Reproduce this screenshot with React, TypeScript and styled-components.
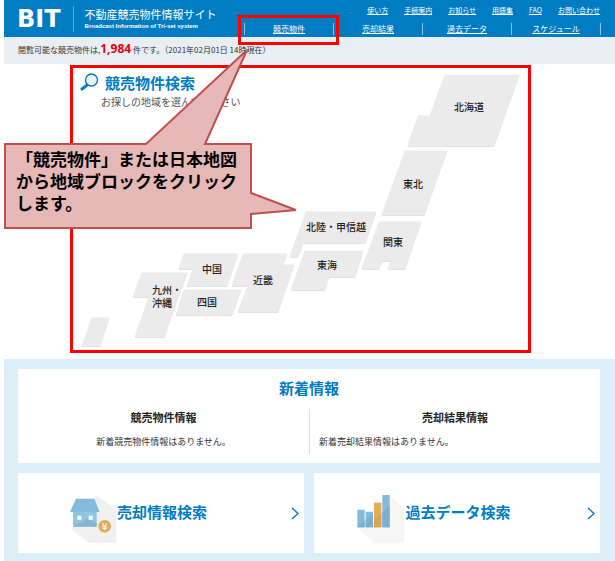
import React from "react";
import styled, { createGlobalStyle } from "styled-components";

const GlobalStyle = createGlobalStyle`
  *, *::before, *::after { box-sizing: border-box; }
  body {
    margin: 0;
    background: #fff;
    color: #333;
    font-family: "Noto Sans CJK JP", "Noto Sans", sans-serif;
  }
  h1, h2, h3, p, ul { margin: 0; padding: 0; }
  ul { list-style: none; }
`;

const Page = styled.div`
  position: relative;
  margin-left: 4px;
`;

const Header = styled.header`
  display: flex;
  justify-content: space-between;
  height: 37px;
  padding: 0 14px 0 13px;
  background: #007cc3;
  color: #fff;
`;

const Brand = styled.div`
  display: flex;
  align-items: center;
`;

const Logo = styled.a`
  padding-right: 12px;
  color: #fff;
  font: 700 24px/26px "DejaVu Sans", sans-serif;
  text-decoration: none;
`;

const SiteName = styled.div`
  padding-left: 11px;
  border-left: 1px solid #55a8d9;
`;

const SiteTitle = styled.h1`
  font-size: 11px;
  font-weight: 400;
  line-height: 16px;
  white-space: nowrap;
`;

const SiteSubtitle = styled.p`
  padding-bottom: 2px;
  font: 700 6px/8px "Liberation Sans", sans-serif;
  white-space: nowrap;
`;

const Menus = styled.div`
  display: flex;
  flex-direction: column;
  align-items: flex-end;
  padding-top: 5px;
  gap: 8px;
`;

const HelpLinks = styled.ul`
  display: flex;
  gap: 16px;
  padding-right: 1px;
  font-size: 7px;
  line-height: 10px;
  white-space: nowrap;
`;

const HeaderLink = styled.a`
  color: #fff;
  text-decoration: underline;
`;

const MainNav = styled.ul`
  display: flex;
  border-left: 1px solid #8cc4e6;
  font-size: 8px;
  line-height: 12px;
`;

const NavItem = styled.li<{ $marked?: boolean }>`
  position: relative;
  width: 89px;
  border-right: 1px solid #8cc4e6;
  text-align: center;
  ${({ $marked }) =>
    $marked &&
    `&::after {
      content: "";
      position: absolute;
      inset: -8px -6px -10px -7px;
      border: 3px solid #f00;
      pointer-events: none;
    }`}
`;

const Notice = styled.p`
  height: 27px;
  padding-left: 14px;
  background: #e9eef3;
  color: #333;
  font-size: 8px;
  line-height: 26px;
  white-space: nowrap;
`;

const Count = styled.strong`
  margin-right: 2px;
  color: #e60012;
  font: 700 12px/20px "Open Sans", sans-serif;
`;

const SearchArea = styled.main`
  padding: 1px 84px 6px 66px;
`;

const SearchPanel = styled.section`
  display: grid;
  border: 3px solid #f00;
`;

const SearchIntro = styled.div`
  grid-area: 1 / 1;
  display: grid;
  grid-template-columns: 20px 1fr;
  align-content: start;
  column-gap: 5px;
  padding: 4px 7px;
`;

const SearchTitle = styled.h2`
  color: #007cc3;
  font-size: 15px;
  font-weight: 700;
  line-height: 22px;
`;

const SearchHint = styled.p`
  grid-column: 1 / 3;
  padding-left: 21px;
  color: #555;
  font-size: 10px;
  line-height: 16px;
`;

const MapCanvas = styled.div`
  grid-area: 1 / 1;
  position: relative;
  height: 282px;
`;

const MapDrawing = styled.svg`
  display: block;
  overflow: visible;
`;

const RegionLink = styled.a<{ $x: number; $y: number }>`
  position: absolute;
  left: ${({ $x }) => $x}px;
  top: ${({ $y }) => $y}px;
  transform: translate(-50%, -50%);
  color: #222;
  font-size: 10px;
  font-weight: 500;
  line-height: 13px;
  text-decoration: none;
  white-space: pre;
`;

const Callout = styled.aside`
  position: absolute;
  top: 143px;
  left: 0;
  width: 248px;
  height: 86px;
`;

const CalloutShape = styled.svg`
  position: absolute;
  top: -97px;
  left: 0;
`;

const CalloutText = styled.p`
  position: relative;
  padding: 5px 0 0 12px;
  color: #000;
  font-size: 17px;
  font-weight: 700;
  line-height: 22px;
  white-space: nowrap;
`;

const Lower = styled.div`
  display: grid;
  grid-template-columns: 1fr 1fr;
  gap: 10px;
  padding: 10px 15px 14px 14px;
  background: #dceef8;
`;

const News = styled.section`
  grid-column: 1 / 3;
  padding: 8px 0 9px;
  background: #fff;
`;

const NewsTitle = styled.h2`
  color: #007cc3;
  font-size: 15px;
  line-height: 22px;
  text-align: center;
`;

const NewsColumns = styled.div`
  display: grid;
  grid-template-columns: 1fr 1fr;
  margin-top: 10px;
`;

const NewsColumn = styled.div<{ $divided?: boolean }>`
  height: 45px;
  padding: 0 9px;
  border-left: ${({ $divided }) => ($divided ? "1px solid #cfe4f1" : "0")};
  text-align: ${({ $divided }) => ($divided ? "left" : "center")};
`;

const NewsHeading = styled.h3`
  color: #222;
  font-size: 11px;
  line-height: 16px;
  text-align: center;
`;

const NewsText = styled.p`
  padding-top: 10px;
  font-size: 9px;
  line-height: 14px;
  white-space: nowrap;
`;

const LinkCard = styled.a`
  position: relative;
  display: flex;
  align-items: center;
  justify-content: center;
  height: 80px;
  padding: 0 46px 2px 0;
  background: #fff;
  color: #007cc3;
  font-size: 15px;
  font-weight: 700;
  line-height: 22px;
  text-decoration: none;
  white-space: nowrap;
`;

const CardIcon = styled.svg`
  margin-top: 14px;
`;

const CardArrow = styled.svg`
  position: absolute;
  top: 34px;
  right: 5px;
`;

const helpLinks = ["使い方", "手続案内", "お知らせ", "用語集", "FAQ", "お問い合わせ"];
const navLinks = ["競売物件", "売却結果", "過去データ", "スケジュール"];

const regions = [
  { name: "北海道", x: 396, y: 38, shape: "372,7 446,7 421,78 335,78 345,48 357,48" },
  { name: "東北", x: 340, y: 115, shape: "332,83 374,83 351,147 309,147" },
  { name: "北陸・甲信越", x: 263, y: 158, shape: "233,144 303,144 292,175 230,175 225,189 217,189" },
  { name: "関東", x: 320, y: 173, shape: "306,154 348,154 332,201 315,201 318,193 309,193 306,201 289,201" },
  { name: "東海", x: 254, y: 196, shape: "232,183 290,183 282,209 256,209 252,222 218,222" },
  { name: "近畿", x: 190, y: 211, shape: "170,186 214,186 210,197 221,197 205,244 165,244 175,218 159,218" },
  { name: "中国", x: 139, y: 200, shape: "111,186 165,186 154,218 114,218 120,201 106,201" },
  { name: "四国", x: 134, y: 233, shape: "111,222 168,222 159,247 103,247" },
  { name: "九州・\n沖縄", x: 94, y: 228, shape: "69,205 114,205 91,269 62,269 76,229 60,229" },
];
const okinawa = "19,250 36,250 27,278 9,278";

const SearchIcon = () => (
  <svg width="20" height="20" viewBox="0 0 20 20" aria-hidden="true">
    <path d="M6.5 13.5 2 17" stroke="#007cc3" strokeWidth="3" strokeLinecap="round" />
    <circle cx="11.5" cy="8" r="6" fill="#eef3f7" stroke="#007cc3" strokeWidth="1.4" />
  </svg>
);

const HouseIcon = () => (
  <CardIcon width="48" height="50" viewBox="211 103 144 150" aria-hidden="true">
    <path d="M292 107 353 150V249H270L217 207Z" fill="#f0f0f0" />
    <path d="M223 157H294V201H223Z" fill="#93c5e2" />
    <path d="M223 201 265 178 294 190V201Z" fill="#84b5d3" />
    <path d="M232 117H287L303 157H214Z" fill="#84bbdd" />
    <path d="M236 168h12v12h-12zM270 168h12v12h-12z" fill="#fff" />
    <circle cx="318" cy="200" r="19" fill="#e3ad5b" />
    <path d="M311 190 318 200 325 190M318 200V211M311 201H325M311 206H325" fill="none" stroke="#fff" strokeWidth="3" />
  </CardIcon>
);

const ChartIcon = () => (
  <CardIcon width="48" height="50" viewBox="177 103 144 150" aria-hidden="true">
    <path d="M275 106 319 150V249H226L178 203Z" fill="#f6f6f6" />
    <path d="M178 150h22v53h-22zM203 156h22v47h-22zM253 106h22v97h-22z" fill="#84bbdb" />
    <path d="M228 129h22v74h-22z" fill="#e3ad5b" />
    <path d="M178 203 200 183V203ZM203 203V180L225 163V203ZM253 203V158L275 136V203Z" fill="#7aafcf" />
    <path d="M228 203V181L250 161V203Z" fill="#d8a257" />
  </CardIcon>
);

const Arrow = () => (
  <CardArrow width="8" height="13" viewBox="0 0 8 13" aria-hidden="true">
    <path d="M1 1 7 6.5 1 12" fill="none" stroke="#007cc3" strokeWidth="1.4" />
  </CardArrow>
);

export default function App() {
  return (
    <Page>
      <GlobalStyle />
      <Header>
        <Brand>
          <Logo href="#top">BIT</Logo>
          <SiteName>
            <SiteTitle>不動産競売物件情報サイト</SiteTitle>
            <SiteSubtitle>Broadcast Information of Tri-set system</SiteSubtitle>
          </SiteName>
        </Brand>
        <Menus>
          <HelpLinks>
            {helpLinks.map((label) => (
              <li key={label}>
                <HeaderLink href="#help">{label}</HeaderLink>
              </li>
            ))}
          </HelpLinks>
          <MainNav>
            {navLinks.map((label, i) => (
              <NavItem key={label} $marked={i === 0}>
                <HeaderLink href="#nav">{label}</HeaderLink>
              </NavItem>
            ))}
          </MainNav>
        </Menus>
      </Header>
      <Notice>
        閲覧可能な競売物件は,<Count>1,984</Count>件です。（2021年02月01日 14時現在）
      </Notice>
      <SearchArea>
        <SearchPanel>
          <MapCanvas>
            <MapDrawing width="455" height="282" viewBox="0 0 455 282" aria-hidden="true">
              {[...regions.map((r) => r.shape), okinawa].map((shape) => (
                <g key={shape} strokeLinejoin="round">
                  <polygon points={shape} fill="#d8d8d8" transform="translate(0 1)" />
                  <polygon points={shape} fill="#ebebeb" stroke="#ebebeb" />
                </g>
              ))}
            </MapDrawing>
            {regions.map((r) => (
              <RegionLink key={r.name} href="#region" $x={r.x} $y={r.y}>
                {r.name}
              </RegionLink>
            ))}
          </MapCanvas>
          <SearchIntro>
            <SearchIcon />
            <SearchTitle>競売物件検索</SearchTitle>
            <SearchHint>お探しの地域を選んでください</SearchHint>
          </SearchIntro>
        </SearchPanel>
      </SearchArea>
      <Lower>
        <News>
          <NewsTitle>新着情報</NewsTitle>
          <NewsColumns>
            <NewsColumn>
              <NewsHeading>競売物件情報</NewsHeading>
              <NewsText>新着競売物件情報はありません。</NewsText>
            </NewsColumn>
            <NewsColumn $divided>
              <NewsHeading>売却結果情報</NewsHeading>
              <NewsText>新着売却結果情報はありません。</NewsText>
            </NewsColumn>
          </NewsColumns>
        </News>
        <LinkCard href="#sales">
          <HouseIcon />
          売却情報検索
          <Arrow />
        </LinkCard>
        <LinkCard href="#history">
          <ChartIcon />
          過去データ検索
          <Arrow />
        </LinkCard>
      </Lower>
      <Callout>
        <CalloutShape width="296" height="184" viewBox="0 0 296 184" aria-hidden="true">
          <path
            d="M1 98H142L243 4 201 98H247V147L292 164 247 168V182H1Z"
            fill="#e6b8b7"
            stroke="#c0504d"
            strokeWidth="2"
          />
        </CalloutShape>
        <CalloutText>
          「競売物件」または日本地図
          <br />
          から地域ブロックをクリック
          <br />
          します。
        </CalloutText>
      </Callout>
    </Page>
  );
}
